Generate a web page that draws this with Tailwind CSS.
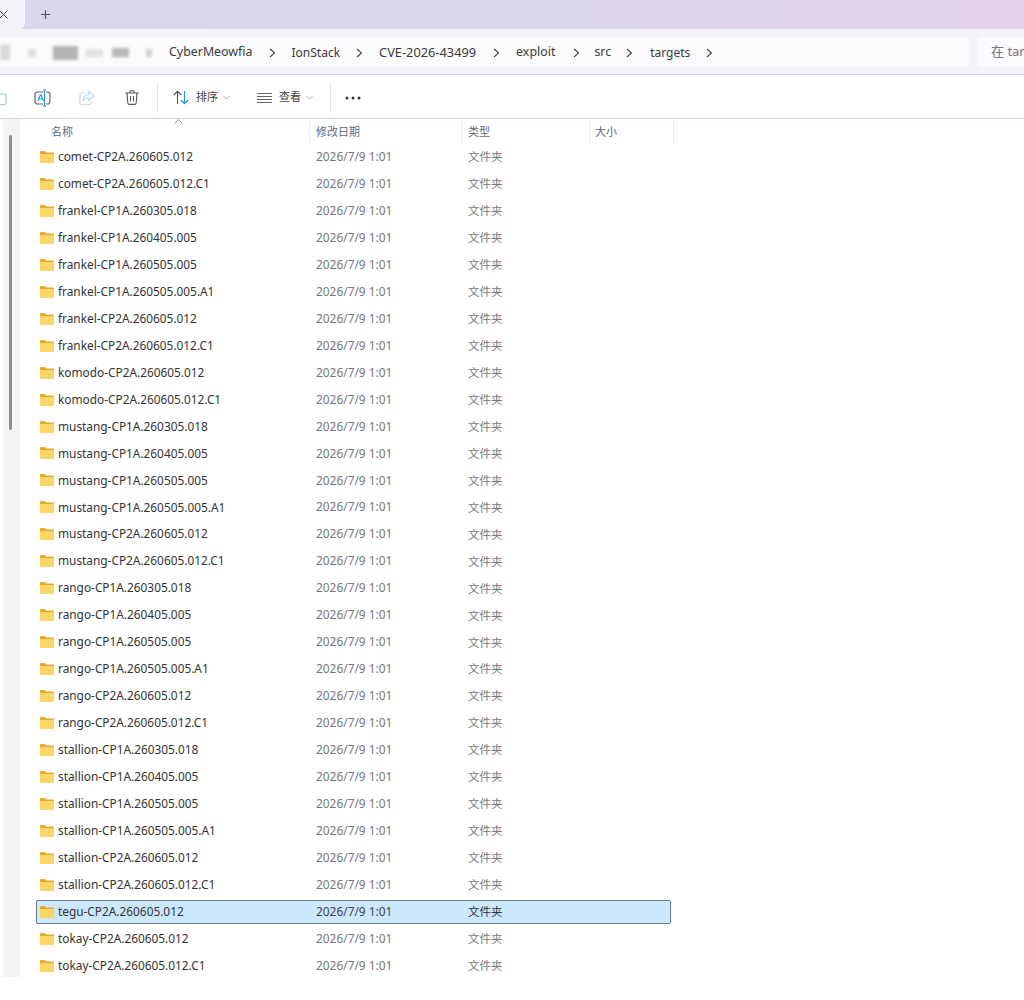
<!doctype html>
<html><head><meta charset="utf-8"><script src="https://cdn.jsdelivr.net/npm/@tailwindcss/browser@4"></script></head>
<body class="bg-white">
<svg width="0" height="0" class="absolute"><defs>
<symbol id="f" viewBox="0 0 14 12"><path d="M0 1.2Q0 0 1.2 0H4.6L6.2 1.6H12.8Q14 1.6 14 2.8V3H0Z" fill="#e8a825"/><path d="M0 3H14V10.8Q14 12 12.8 12H1.2Q0 12 0 10.8Z" fill="#fbd568"/></symbol>
</defs></svg>
<div class="w-[1024px] h-[1000px] overflow-hidden flex flex-col bg-white text-[#333] font-['Noto_Sans','Noto_Sans_CJK_SC',sans-serif] text-[11.85px]">

<div class="h-[29px] shrink-0 flex items-stretch bg-gradient-to-r from-[#dcd6ec] via-[#dcd8ec] to-[#e4d4ea]">
  <div class="w-[25px] bg-[#f6f4fb] rounded-br-[6px] flex items-center pl-0 justify-start">
    <svg width="9" height="9" viewBox="0 0 9 9" class="-ml-[1px]"><path d="M.5.5l8 8M8.5.5l-8 8" stroke="#444" stroke-width="1"/></svg>
  </div>
  <div class="ml-[15px] flex items-center"><svg width="11" height="11" viewBox="0 0 11 11"><path d="M5.5 1v9M1 5.5h9" stroke="#555" stroke-width="1.2"/></svg></div>
</div>

<div class="h-[46px] shrink-0 bg-[#f5f3fa] flex gap-[8px] pt-[8px] pb-[7px] border-b border-[#d6d1e6]">
  <div class="w-[969px] h-[30px] pt-[1px] bg-[#fbfafd] rounded-r-[4px] flex items-center text-[12.4px] text-[#3a3a3a] relative">
    <div class="flex items-center w-[169px] shrink-0 blur-[1.5px]">
      <div class="w-[10px] h-[15px] bg-[#d8d8d8]"></div>
      <div class="w-[8px] h-[8px] bg-[#ddd] ml-[18px]"></div>
      <div class="w-[25px] h-[14px] bg-[#b4b4b4] ml-[17px]"></div>
      <div class="w-[17px] h-[8px] bg-[#e2e2e2] ml-[8px]"></div>
      <div class="w-[17px] h-[9px] bg-[#b8b8b8] ml-[9px]"></div>
      <div class="w-[6px] h-[8px] bg-[#d4d4d4] ml-[17px]"></div>
    </div>
    <span>CyberMeowfia</span>
    <svg width="7" height="10" viewBox="0 0 7 10" class="ml-[16px] mr-[16px]"><path d="M1 1l4.5 4L1 9" fill="none" stroke="#444" stroke-width="1.1"/></svg>
    <span class="text-[12px]">IonStack</span>
    <svg width="7" height="10" viewBox="0 0 7 10" class="ml-[16px] mr-[16px]"><path d="M1 1l4.5 4L1 9" fill="none" stroke="#444" stroke-width="1.1"/></svg>
    <span class="text-[12.8px]">CVE-2026-43499</span>
    <svg width="7" height="10" viewBox="0 0 7 10" class="ml-[17px] mr-[16px]"><path d="M1 1l4.5 4L1 9" fill="none" stroke="#444" stroke-width="1.1"/></svg>
    <span>exploit</span>
    <svg width="7" height="10" viewBox="0 0 7 10" class="ml-[18px] mr-[14px]"><path d="M1 1l4.5 4L1 9" fill="none" stroke="#444" stroke-width="1.1"/></svg>
    <span>src</span>
    <svg width="7" height="10" viewBox="0 0 7 10" class="ml-[15px] mr-[17px]"><path d="M1 1l4.5 4L1 9" fill="none" stroke="#444" stroke-width="1.1"/></svg>
    <span class="text-[12px]">targets</span>
    <svg width="7" height="10" viewBox="0 0 7 10" class="ml-[16px]"><path d="M1 1l4.5 4L1 9" fill="none" stroke="#444" stroke-width="1.1"/></svg>
  </div>
  <div class="flex-1 h-[30px] bg-[#fbfafd] rounded-l-[4px] pl-[14px] flex items-center text-[13px] text-[#777] whitespace-nowrap overflow-hidden">在 tar</div>
</div>

<div class="h-[44px] pt-[2px] shrink-0 flex items-center relative border-b border-[#d3cee4] text-[#444]">
  <svg width="7" height="16" viewBox="0 0 7 16" class="shrink-0"><path d="M0 4H4.5Q6 4 6 5.5V13Q6 14.5 4.5 14.5H0" fill="none" stroke="#9cc6e6" stroke-width="1.2"/></svg>
  <svg width="18" height="18" viewBox="0 0 18 18" class="ml-[27px] shrink-0"><rect x="1" y="3" width="15" height="12" rx="2.5" fill="none" stroke="#666" stroke-width="1.2"/><path d="M10.500 1v16" stroke="#fff" stroke-width="3"/><path d="M9 1h3M10.500 1v16M9 17h3" stroke="#2b8fd6" stroke-width="1" fill="none"/><path d="M3.800 12L6.300 6h.8L9.500 12M4.800 10H8.500" stroke="#2b8fd6" stroke-width="1.1" fill="none"/></svg>
  <svg width="16" height="16" viewBox="0 0 16 16" class="ml-[27px] shrink-0"><path d="M6 3H3Q1 3 1 5V12.500Q1 14.500 3 14.500H10Q12 14.500 12 12.500V11" fill="none" stroke="#d8d8d8" stroke-width="1.2"/><path d="M9.500 1.500L15 6l-5.500 4.500V8Q6 8 4 11Q4.500 5 9.500 4.500Z" fill="none" stroke="#bcd9ee" stroke-width="1.2"/></svg>
  <svg width="14" height="15" viewBox="0 0 14 15" class="ml-[30px] shrink-0"><path d="M.5 3h13M5 3V1.500Q5 .7 6 .7H8Q9 .7 9 1.500V3M2 3l.8 10Q3 14.400 4.500 14.400H9.500Q11 14.400 11.200 13L12 3M5.500 6v5.500M8.500 6v5.500" fill="none" stroke="#555" stroke-width="1.1"/></svg>
  <div class="w-px h-[30px] bg-[#e4e4e4] ml-[18px] shrink-0"></div>
  <svg width="17" height="15" viewBox="0 0 17 15" class="ml-[15px] shrink-0"><path d="M4.500 14V1.500M.8 5l3.700-3.700L8.200 5" fill="none" stroke="#555" stroke-width="1.1"/><path d="M11.500 1v12.500M7.800 10l3.700 3.700L15.200 10" fill="none" stroke="#2b8fd6" stroke-width="1.2"/></svg>
  <span class="ml-[6px] text-[11px]">排序</span>
  <svg width="7" height="5" viewBox="0 0 7 5" class="ml-[5px] shrink-0"><path d="M.5 1l3 3 3-3" fill="none" stroke="#aaa"/></svg>
  <svg width="15" height="10" viewBox="0 0 15 10" class="ml-[27px] shrink-0"><path d="M0 .5h15M0 3.500h15M0 6.500h15M0 9.500h15" stroke="#666" stroke-width="1"/></svg>
  <span class="ml-[7px] text-[11px]">查看</span>
  <svg width="7" height="5" viewBox="0 0 7 5" class="ml-[5px] shrink-0"><path d="M.5 1l3 3 3-3" fill="none" stroke="#aaa"/></svg>
  <div class="w-px h-[30px] bg-[#e4e4e4] ml-[17px] shrink-0"></div>
  <svg width="16" height="4" viewBox="0 0 16 4" class="ml-[14px] shrink-0"><circle cx="2" cy="2" r="1.500" fill="#333"/><circle cx="8" cy="2" r="1.500" fill="#333"/><circle cx="14" cy="2" r="1.500" fill="#333"/></svg>
</div>

<div class="flex-1 flex min-h-0">
  <div class="w-[20px] h-[858px] shrink-0 flex">
    <div class="w-[3px]"></div>
    <div class="w-[17px] bg-[#f4f4f4] relative"><div class="absolute left-[6px] top-[16px] w-[3px] h-[295px] bg-[#8f8f8f] rounded-full"></div></div>
  </div>
  <div class="flex-1 min-w-0">
    <div class="h-[26px] flex relative text-[11px] text-[#5d6b7a]">
      <svg width="9" height="5" viewBox="0 0 9 5" class="absolute left-[154px] top-0"><path d="M.5 4.500L4.500.5l4 4" fill="none" stroke="#999"/></svg>
      <div class="w-[290px] pl-[31px] flex items-center border-r border-[#eeeeee]">名称</div>
      <div class="w-[152px] pl-[6px] flex items-center border-r border-[#eeeeee]">修改日期</div>
      <div class="w-[128px] pl-[6px] flex items-center border-r border-[#eeeeee]">类型</div>
      <div class="w-[84px] pl-[5px] flex items-center border-r border-[#eeeeee]">大小</div>
    </div>
    <div class="flex flex-col gap-[2.96px] pl-[16px] w-[651px]">
      <div class="h-[24px] flex items-center"><svg width="14" height="12" class="ml-[4px] shrink-0"><use href="#f"/></svg><span class="ml-[4px] w-[258px] shrink-0">comet-CP2A.260605.012</span><span class="w-[152px] shrink-0 text-[#777] text-[11.9px]">2026/7/9 1:01</span><span class="text-[#777] text-[11.5px]">文件夹</span></div>
      <div class="h-[24px] flex items-center"><svg width="14" height="12" class="ml-[4px] shrink-0"><use href="#f"/></svg><span class="ml-[4px] w-[258px] shrink-0">comet-CP2A.260605.012.C1</span><span class="w-[152px] shrink-0 text-[#777] text-[11.9px]">2026/7/9 1:01</span><span class="text-[#777] text-[11.5px]">文件夹</span></div>
      <div class="h-[24px] flex items-center"><svg width="14" height="12" class="ml-[4px] shrink-0"><use href="#f"/></svg><span class="ml-[4px] w-[258px] shrink-0">frankel-CP1A.260305.018</span><span class="w-[152px] shrink-0 text-[#777] text-[11.9px]">2026/7/9 1:01</span><span class="text-[#777] text-[11.5px]">文件夹</span></div>
      <div class="h-[24px] flex items-center"><svg width="14" height="12" class="ml-[4px] shrink-0"><use href="#f"/></svg><span class="ml-[4px] w-[258px] shrink-0">frankel-CP1A.260405.005</span><span class="w-[152px] shrink-0 text-[#777] text-[11.9px]">2026/7/9 1:01</span><span class="text-[#777] text-[11.5px]">文件夹</span></div>
      <div class="h-[24px] flex items-center"><svg width="14" height="12" class="ml-[4px] shrink-0"><use href="#f"/></svg><span class="ml-[4px] w-[258px] shrink-0">frankel-CP1A.260505.005</span><span class="w-[152px] shrink-0 text-[#777] text-[11.9px]">2026/7/9 1:01</span><span class="text-[#777] text-[11.5px]">文件夹</span></div>
      <div class="h-[24px] flex items-center"><svg width="14" height="12" class="ml-[4px] shrink-0"><use href="#f"/></svg><span class="ml-[4px] w-[258px] shrink-0">frankel-CP1A.260505.005.A1</span><span class="w-[152px] shrink-0 text-[#777] text-[11.9px]">2026/7/9 1:01</span><span class="text-[#777] text-[11.5px]">文件夹</span></div>
      <div class="h-[24px] flex items-center"><svg width="14" height="12" class="ml-[4px] shrink-0"><use href="#f"/></svg><span class="ml-[4px] w-[258px] shrink-0">frankel-CP2A.260605.012</span><span class="w-[152px] shrink-0 text-[#777] text-[11.9px]">2026/7/9 1:01</span><span class="text-[#777] text-[11.5px]">文件夹</span></div>
      <div class="h-[24px] flex items-center"><svg width="14" height="12" class="ml-[4px] shrink-0"><use href="#f"/></svg><span class="ml-[4px] w-[258px] shrink-0">frankel-CP2A.260605.012.C1</span><span class="w-[152px] shrink-0 text-[#777] text-[11.9px]">2026/7/9 1:01</span><span class="text-[#777] text-[11.5px]">文件夹</span></div>
      <div class="h-[24px] flex items-center"><svg width="14" height="12" class="ml-[4px] shrink-0"><use href="#f"/></svg><span class="ml-[4px] w-[258px] shrink-0">komodo-CP2A.260605.012</span><span class="w-[152px] shrink-0 text-[#777] text-[11.9px]">2026/7/9 1:01</span><span class="text-[#777] text-[11.5px]">文件夹</span></div>
      <div class="h-[24px] flex items-center"><svg width="14" height="12" class="ml-[4px] shrink-0"><use href="#f"/></svg><span class="ml-[4px] w-[258px] shrink-0">komodo-CP2A.260605.012.C1</span><span class="w-[152px] shrink-0 text-[#777] text-[11.9px]">2026/7/9 1:01</span><span class="text-[#777] text-[11.5px]">文件夹</span></div>
      <div class="h-[24px] flex items-center"><svg width="14" height="12" class="ml-[4px] shrink-0"><use href="#f"/></svg><span class="ml-[4px] w-[258px] shrink-0">mustang-CP1A.260305.018</span><span class="w-[152px] shrink-0 text-[#777] text-[11.9px]">2026/7/9 1:01</span><span class="text-[#777] text-[11.5px]">文件夹</span></div>
      <div class="h-[24px] flex items-center"><svg width="14" height="12" class="ml-[4px] shrink-0"><use href="#f"/></svg><span class="ml-[4px] w-[258px] shrink-0">mustang-CP1A.260405.005</span><span class="w-[152px] shrink-0 text-[#777] text-[11.9px]">2026/7/9 1:01</span><span class="text-[#777] text-[11.5px]">文件夹</span></div>
      <div class="h-[24px] flex items-center"><svg width="14" height="12" class="ml-[4px] shrink-0"><use href="#f"/></svg><span class="ml-[4px] w-[258px] shrink-0">mustang-CP1A.260505.005</span><span class="w-[152px] shrink-0 text-[#777] text-[11.9px]">2026/7/9 1:01</span><span class="text-[#777] text-[11.5px]">文件夹</span></div>
      <div class="h-[24px] flex items-center"><svg width="14" height="12" class="ml-[4px] shrink-0"><use href="#f"/></svg><span class="ml-[4px] w-[258px] shrink-0">mustang-CP1A.260505.005.A1</span><span class="w-[152px] shrink-0 text-[#777] text-[11.9px]">2026/7/9 1:01</span><span class="text-[#777] text-[11.5px]">文件夹</span></div>
      <div class="h-[24px] flex items-center"><svg width="14" height="12" class="ml-[4px] shrink-0"><use href="#f"/></svg><span class="ml-[4px] w-[258px] shrink-0">mustang-CP2A.260605.012</span><span class="w-[152px] shrink-0 text-[#777] text-[11.9px]">2026/7/9 1:01</span><span class="text-[#777] text-[11.5px]">文件夹</span></div>
      <div class="h-[24px] flex items-center"><svg width="14" height="12" class="ml-[4px] shrink-0"><use href="#f"/></svg><span class="ml-[4px] w-[258px] shrink-0">mustang-CP2A.260605.012.C1</span><span class="w-[152px] shrink-0 text-[#777] text-[11.9px]">2026/7/9 1:01</span><span class="text-[#777] text-[11.5px]">文件夹</span></div>
      <div class="h-[24px] flex items-center"><svg width="14" height="12" class="ml-[4px] shrink-0"><use href="#f"/></svg><span class="ml-[4px] w-[258px] shrink-0">rango-CP1A.260305.018</span><span class="w-[152px] shrink-0 text-[#777] text-[11.9px]">2026/7/9 1:01</span><span class="text-[#777] text-[11.5px]">文件夹</span></div>
      <div class="h-[24px] flex items-center"><svg width="14" height="12" class="ml-[4px] shrink-0"><use href="#f"/></svg><span class="ml-[4px] w-[258px] shrink-0">rango-CP1A.260405.005</span><span class="w-[152px] shrink-0 text-[#777] text-[11.9px]">2026/7/9 1:01</span><span class="text-[#777] text-[11.5px]">文件夹</span></div>
      <div class="h-[24px] flex items-center"><svg width="14" height="12" class="ml-[4px] shrink-0"><use href="#f"/></svg><span class="ml-[4px] w-[258px] shrink-0">rango-CP1A.260505.005</span><span class="w-[152px] shrink-0 text-[#777] text-[11.9px]">2026/7/9 1:01</span><span class="text-[#777] text-[11.5px]">文件夹</span></div>
      <div class="h-[24px] flex items-center"><svg width="14" height="12" class="ml-[4px] shrink-0"><use href="#f"/></svg><span class="ml-[4px] w-[258px] shrink-0">rango-CP1A.260505.005.A1</span><span class="w-[152px] shrink-0 text-[#777] text-[11.9px]">2026/7/9 1:01</span><span class="text-[#777] text-[11.5px]">文件夹</span></div>
      <div class="h-[24px] flex items-center"><svg width="14" height="12" class="ml-[4px] shrink-0"><use href="#f"/></svg><span class="ml-[4px] w-[258px] shrink-0">rango-CP2A.260605.012</span><span class="w-[152px] shrink-0 text-[#777] text-[11.9px]">2026/7/9 1:01</span><span class="text-[#777] text-[11.5px]">文件夹</span></div>
      <div class="h-[24px] flex items-center"><svg width="14" height="12" class="ml-[4px] shrink-0"><use href="#f"/></svg><span class="ml-[4px] w-[258px] shrink-0">rango-CP2A.260605.012.C1</span><span class="w-[152px] shrink-0 text-[#777] text-[11.9px]">2026/7/9 1:01</span><span class="text-[#777] text-[11.5px]">文件夹</span></div>
      <div class="h-[24px] flex items-center"><svg width="14" height="12" class="ml-[4px] shrink-0"><use href="#f"/></svg><span class="ml-[4px] w-[258px] shrink-0">stallion-CP1A.260305.018</span><span class="w-[152px] shrink-0 text-[#777] text-[11.9px]">2026/7/9 1:01</span><span class="text-[#777] text-[11.5px]">文件夹</span></div>
      <div class="h-[24px] flex items-center"><svg width="14" height="12" class="ml-[4px] shrink-0"><use href="#f"/></svg><span class="ml-[4px] w-[258px] shrink-0">stallion-CP1A.260405.005</span><span class="w-[152px] shrink-0 text-[#777] text-[11.9px]">2026/7/9 1:01</span><span class="text-[#777] text-[11.5px]">文件夹</span></div>
      <div class="h-[24px] flex items-center"><svg width="14" height="12" class="ml-[4px] shrink-0"><use href="#f"/></svg><span class="ml-[4px] w-[258px] shrink-0">stallion-CP1A.260505.005</span><span class="w-[152px] shrink-0 text-[#777] text-[11.9px]">2026/7/9 1:01</span><span class="text-[#777] text-[11.5px]">文件夹</span></div>
      <div class="h-[24px] flex items-center"><svg width="14" height="12" class="ml-[4px] shrink-0"><use href="#f"/></svg><span class="ml-[4px] w-[258px] shrink-0">stallion-CP1A.260505.005.A1</span><span class="w-[152px] shrink-0 text-[#777] text-[11.9px]">2026/7/9 1:01</span><span class="text-[#777] text-[11.5px]">文件夹</span></div>
      <div class="h-[24px] flex items-center"><svg width="14" height="12" class="ml-[4px] shrink-0"><use href="#f"/></svg><span class="ml-[4px] w-[258px] shrink-0">stallion-CP2A.260605.012</span><span class="w-[152px] shrink-0 text-[#777] text-[11.9px]">2026/7/9 1:01</span><span class="text-[#777] text-[11.5px]">文件夹</span></div>
      <div class="h-[24px] flex items-center"><svg width="14" height="12" class="ml-[4px] shrink-0"><use href="#f"/></svg><span class="ml-[4px] w-[258px] shrink-0">stallion-CP2A.260605.012.C1</span><span class="w-[152px] shrink-0 text-[#777] text-[11.9px]">2026/7/9 1:01</span><span class="text-[#777] text-[11.5px]">文件夹</span></div>
      <div class="h-[24px] flex items-center bg-[#cce8ff] rounded-[2px] outline outline-1 -outline-offset-1 outline-[#6b7a8a]"><svg width="14" height="12" class="ml-[4px] shrink-0"><use href="#f"/></svg><span class="ml-[4px] w-[258px] shrink-0">tegu-CP2A.260605.012</span><span class="w-[152px] shrink-0 text-[#444] text-[11.9px]">2026/7/9 1:01</span><span class="text-[#333] text-[11.5px]">文件夹</span></div>
      <div class="h-[24px] flex items-center"><svg width="14" height="12" class="ml-[4px] shrink-0"><use href="#f"/></svg><span class="ml-[4px] w-[258px] shrink-0">tokay-CP2A.260605.012</span><span class="w-[152px] shrink-0 text-[#777] text-[11.9px]">2026/7/9 1:01</span><span class="text-[#777] text-[11.5px]">文件夹</span></div>
      <div class="h-[24px] flex items-center"><svg width="14" height="12" class="ml-[4px] shrink-0"><use href="#f"/></svg><span class="ml-[4px] w-[258px] shrink-0">tokay-CP2A.260605.012.C1</span><span class="w-[152px] shrink-0 text-[#777] text-[11.9px]">2026/7/9 1:01</span><span class="text-[#777] text-[11.5px]">文件夹</span></div>
    </div>
  </div>
</div>
</div>
</body></html>
